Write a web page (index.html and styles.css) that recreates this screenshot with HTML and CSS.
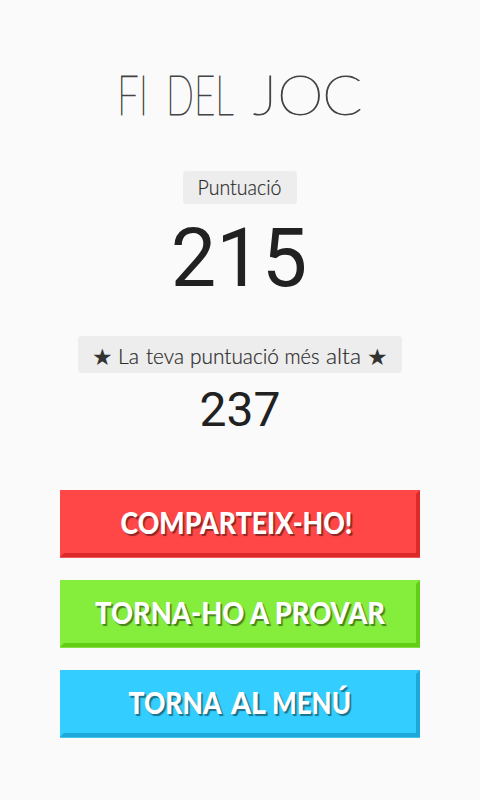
FILE: index.html
```html
<!DOCTYPE html>
<html lang="ca">
<head>
<meta charset="utf-8">
<meta name="viewport" content="width=device-width">
<title>Fi del joc</title>
<link rel="stylesheet" href="styles.css">
</head>
<body>
<main class="screen">
  <h1 class="title">
    <svg width="480" height="60" viewBox="0 65 480 60">
      <text x="117" y="115" textLength="31" lengthAdjust="spacingAndGlyphs">FI</text>
      <text transform="translate(166 115) scale(.72 1)" textLength="94" lengthAdjust="spacingAndGlyphs">DEL</text>
      <text transform="translate(253 115) scale(1.05 1)" x="0 23 66" y="0">JOC</text>
    </svg>
  </h1>
  <div class="tag tag-score">
    <svg width="114" height="33" viewBox="183 170.5 114 33">
      <text x="197.5" y="194" textLength="84" lengthAdjust="spacingAndGlyphs">Puntuació</text>
    </svg>
  </div>
  <div class="score">215</div>
  <div class="tag tag-best">
    <svg width="324" height="38" viewBox="78 335.5 324 38">
      <text class="star" x="92" y="364.5">★</text>
      <text x="118" y="363" textLength="21" lengthAdjust="spacingAndGlyphs">La</text>
      <text x="146" y="363" textLength="38" lengthAdjust="spacingAndGlyphs">teva</text>
      <text x="190" y="363" textLength="89" lengthAdjust="spacingAndGlyphs">puntuació</text>
      <text x="284.5" y="363" textLength="35" lengthAdjust="spacingAndGlyphs">més</text>
      <text x="326" y="363" textLength="35" lengthAdjust="spacingAndGlyphs">alta</text>
      <text class="star" x="367" y="364.5">★</text>
    </svg>
  </div>
  <div class="best">237</div>
  <nav class="actions">
    <button class="btn red">
      <svg width="360" height="67" viewBox="60 0 360 67">
        <text x="120.5" y="44" textLength="232" lengthAdjust="spacingAndGlyphs">COMPARTEIX-HO!</text>
      </svg>
    </button>
    <button class="btn green">
      <svg width="360" height="67" viewBox="60 0 360 67">
        <text x="95" y="44" textLength="290" lengthAdjust="spacingAndGlyphs">TORNA-HO A PROVAR</text>
      </svg>
    </button>
    <button class="btn blue">
      <svg width="360" height="67" viewBox="60 0 360 67">
        <text x="128.5" y="44" textLength="93" lengthAdjust="spacingAndGlyphs">TORNA</text>
        <text x="231" y="44" textLength="35" lengthAdjust="spacingAndGlyphs">AL</text>
        <text x="272" y="44" textLength="79" lengthAdjust="spacingAndGlyphs">MENÚ</text>
      </svg>
    </button>
  </nav>
</main>
</body>
</html>
```
FILE: styles.css
```css
* { box-sizing: border-box; }
body { margin: 0; background: #fafafa; }
svg { display: block; overflow: visible; }
.screen {
  width: 480px;
  height: 800px;
  padding-top: 65px;
  display: flex;
  flex-direction: column;
  align-items: center;
  overflow: hidden;
  font-family: Roboto, sans-serif;
  color: #212121;
}
.title {
  margin: 0;
  height: 60px;
  font: 100 56px Lato, sans-serif;
  fill: #444;
  stroke: #444;
  stroke-width: 1px;
}
.tag {
  border-radius: 4px;
  background: #ededed;
  font: 300 22px Lato, sans-serif;
  fill: #2b2b2b;
  stroke: #2b2b2b;
  stroke-width: .2px;
}
.tag-score { margin-top: 46px; width: 114px; height: 33px; }
.tag-best { margin-top: 35px; width: 324px; height: 37px; }
.star { font: 23px "DejaVu Sans", sans-serif; fill: #333; stroke: none; }
.score { height: 97px; font-size: 81px; line-height: 110px; margin-left: -2px; }
.best { height: 72px; font-size: 48px; line-height: 73px; }
.actions {
  margin-top: 45px;
  display: flex;
  flex-direction: column;
  gap: 23px;
}
.btn {
  width: 360px;
  height: 67px;
  padding: 0;
  border: 4px solid var(--face);
  border-right-color: var(--edge);
  border-bottom-color: var(--edge);
  background: var(--face);
  box-shadow: 0 1px var(--rim);
  font: 900 30px Lato, sans-serif;
}
.btn svg { margin: -4px; fill: #fff; }
.btn text { text-shadow: 2px 2px 1px rgba(0, 0, 0, .45); }
.red { --face: #ff4747; --edge: #dc2a2a; --rim: #f25757; }
.green { --face: #85ee3c; --edge: #62cf14; --rim: #83df45; }
.blue { --face: #33ceff; --edge: #1aa9d8; --rim: #48c4e9; }
```
